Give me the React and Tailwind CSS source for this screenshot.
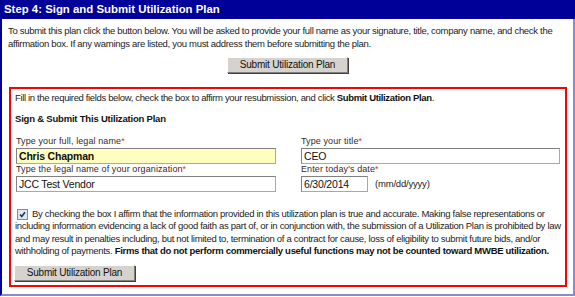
import React from "react";

const font = { fontFamily: '"Liberation Sans", Arial, sans-serif' };

function Btn({ className = "" }) {
  return (
    <button
      className={`h-[16px] bg-[#d6d3ce] text-[#111] text-[10px] tracking-[-0.2px] leading-none border border-t-white border-l-white border-r-[#808080] border-b-[#808080] shadow-[1px_1px_0_#404040] ${className}`}
    >
      Submit Utilization Plan
    </button>
  );
}

function Label({ children }) {
  return (
    <div className="text-[9px] tracking-[0.1px] text-[#3a2a2a] leading-[11px] h-[11px] whitespace-nowrap">
      {children}
      <span className="text-[#e03030]">*</span>
    </div>
  );
}

function Input({ value, className = "" }) {
  return (
    <div
      className={`h-[16px] border border-[#a8a8a8] border-t-[#808080] border-l-[#808080] text-[10.5px] tracking-[-0.2px] leading-[14px] px-[2px] text-[#111] ${className}`}
    >
      {value}
    </div>
  );
}

export default function App() {
  return (
    <div className="w-[575px] h-[297px] bg-white overflow-hidden" style={font}>
      <div className="w-[575px] h-[296px] border-l-2 border-l-[#000099] border-r-2 border-r-[#8a8ad0] border-b-2 border-b-[#8a8ad0] flex flex-col">
        <div className="h-[19px] bg-[#000099] text-white font-bold text-[11.4px] leading-[19px] pl-[4px] -ml-[2px] -mr-[2px] whitespace-nowrap">
          Step 4: Sign and Submit Utilization Plan
        </div>
        <div className="pl-[6px] pt-[5px] text-[9.5px] leading-[13px] text-[#222] tracking-[-0.3px] whitespace-nowrap">
          <div>To submit this plan click the button below. You will be asked to provide your full name as your signature, title, company name, and check the</div>
          <div>affirmation box. If any warnings are listed, you must address them before submitting the plan.</div>
        </div>
        <div className="flex justify-center pt-[7px]">
          <Btn className="w-[121px]" />
        </div>
        <div className="mt-[14px] ml-[7px] w-[558px] h-[200px] border-2 border-[#ff0000] px-[4px] pt-[3px] flex flex-col">
          <div className="text-[9.5px] leading-[12px] text-[#222] tracking-[-0.35px] whitespace-nowrap">
            Fill in the required fields below, check the box to affirm your resubmission, and click <b className="text-[#111]">Submit Utilization Plan</b>.
          </div>
          <div className="mt-[9px] text-[9.5px] leading-[12px] font-bold text-[#111] tracking-[-0.2px] whitespace-nowrap">
            Sign &amp; Submit This Utilization Plan
          </div>
          <div className="mt-[11px] grid grid-cols-[260px_259px] gap-x-[25px] pl-[1px]">
            <div>
              <Label>Type your full, legal name</Label>
              <Input value={<span className="font-bold">Chris Chapman</span>} className="bg-[#ffffc0] mt-[1px]" />
            </div>
            <div>
              <Label>Type your title</Label>
              <Input value="CEO" className="mt-[1px]" />
            </div>
            <div>
              <Label>Type the legal name of your organization</Label>
              <Input value="JCC Test Vendor" className="mt-[1px]" />
            </div>
            <div>
              <Label>Enter today's date</Label>
              <div className="flex items-center gap-[7px] mt-[1px]">
                <Input value="6/30/2014" className="w-[67px]" />
                <span className="text-[9.5px] tracking-[-0.2px] text-[#222]">(mm/dd/yyyy)</span>
              </div>
            </div>
          </div>
          <div className="mt-[16px] text-[9.5px] leading-[12.3px] text-[#222] tracking-[-0.3px] whitespace-nowrap">
            <div className="flex items-center h-[12.3px]">
              <span className="inline-block w-[11px] h-[11px] mr-[4px] ml-[2px] border border-[#7a8ab0] bg-[#dfe6f5] relative">
                <svg viewBox="0 0 9 9" className="absolute inset-0 w-[9px] h-[9px]">
                  <path d="M2 4.5 L3.8 6.5 L7 2.2" stroke="#2a3550" strokeWidth="1.6" fill="none" />
                </svg>
              </span>
              <span>By checking the box I affirm that the information provided in this utilization plan is true and accurate. Making false representations or</span>
            </div>
            <div>including information evidencing a lack of good faith as part of, or in conjunction with, the submission of a Utilization Plan is prohibited by law</div>
            <div>and may result in penalties including, but not limited to, termination of a contract for cause, loss of eligibility to submit future bids, and/or</div>
            <div>
              withholding of payments. <b className="text-[#111]">Firms that do not perform commercially useful functions may not be counted toward MWBE utilization.</b>
            </div>
          </div>
          <div className="mt-[2px] -ml-[1px]">
            <Btn className="w-[121px]" />
          </div>
        </div>
      </div>
    </div>
  );
}
